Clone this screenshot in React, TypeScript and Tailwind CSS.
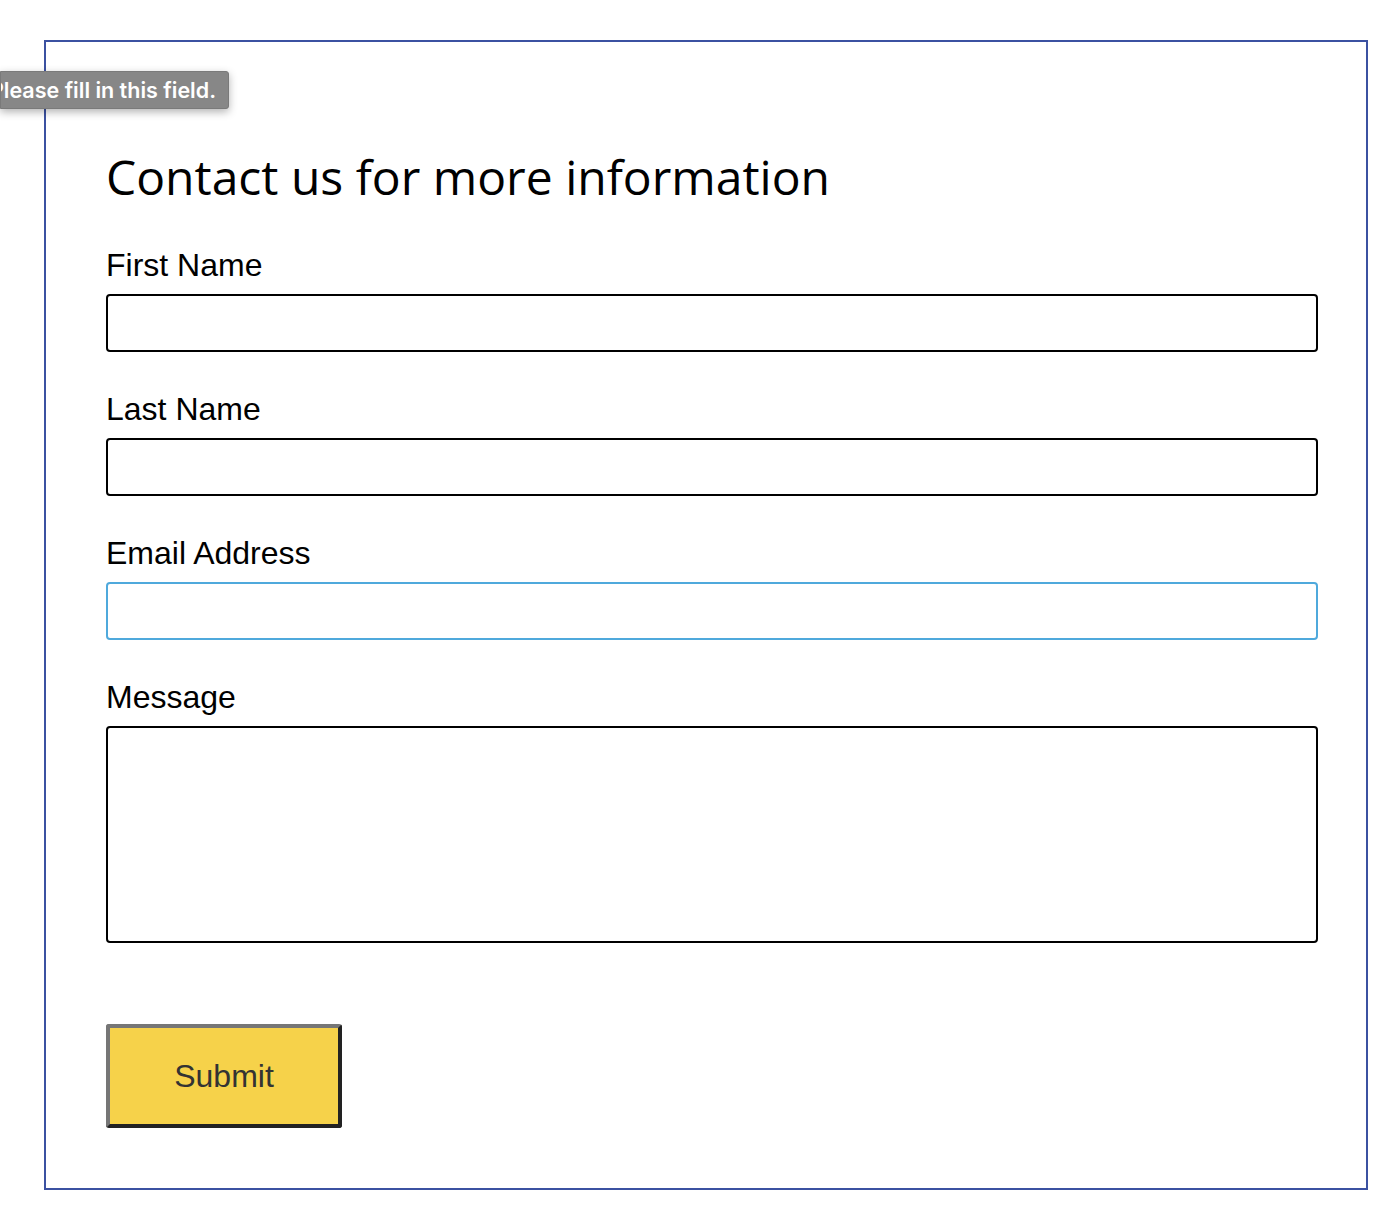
import React from 'react';

const fields = [
  { id: 'first', label: 'First Name', focused: false },
  { id: 'last', label: 'Last Name', focused: false },
  { id: 'email', label: 'Email Address', focused: true },
];

export default function App() {
  return (
    <div className="relative min-h-[1212px] bg-white pt-[40px] pl-[44px]">
      {/* validation bubble */}
      <div className="absolute left-0 top-[71px] z-10 h-[38px] w-[229px] overflow-hidden rounded-r-[3px] border border-[#7a7a7a] bg-[#878787] shadow-[0_3px_8px_rgba(0,0,0,0.3)]">
        <div className="flex h-full items-center justify-end pr-[12px] font-['Inter',sans-serif] text-[21.5px] font-semibold whitespace-nowrap text-white">
          Please fill in this field.
        </div>
      </div>

      <form className="flex h-[1150px] w-[1324px] flex-col border-2 border-[#3b51a1] pt-[106px] pr-[48px] pl-[60px]">
        <h2 className="mb-[39px] font-['Open_Sans',sans-serif] text-[48px] leading-[58px] font-normal text-black">
          Contact us for more information
        </h2>

        {fields.map((f) => (
          <div key={f.id} className="mb-[37px] flex flex-col">
            <label htmlFor={f.id} className="mb-[9px] font-['Liberation_Sans',Arial,sans-serif] text-[32px] leading-[40px] text-black">
              {f.label}
            </label>
            <input
              id={f.id}
              className={`h-[58px] w-full rounded-[4px] border-2 bg-white outline-none ${f.focused ? 'border-[#4fa9dc]' : 'border-black'}`}
            />
          </div>
        ))}

        <div className="flex flex-col">
          <label htmlFor="msg" className="mb-[9px] font-['Liberation_Sans',Arial,sans-serif] text-[32px] leading-[40px] text-black">
            Message
          </label>
          <textarea id="msg" className="h-[217px] w-full resize-none rounded-[4px] border-2 border-black bg-white outline-none" />
        </div>

        <div className="mt-[81px]">
          <button
            type="button"
            className="h-[104px] w-[236px] rounded-[3px] border-4 border-t-[#767676] border-r-[#222] border-b-[#222] border-l-[#767676] bg-[#f6d24a] font-['Liberation_Sans',Arial,sans-serif] text-[32px] text-[#333]"
          >
            Submit
          </button>
        </div>
      </form>
    </div>
  );
}
